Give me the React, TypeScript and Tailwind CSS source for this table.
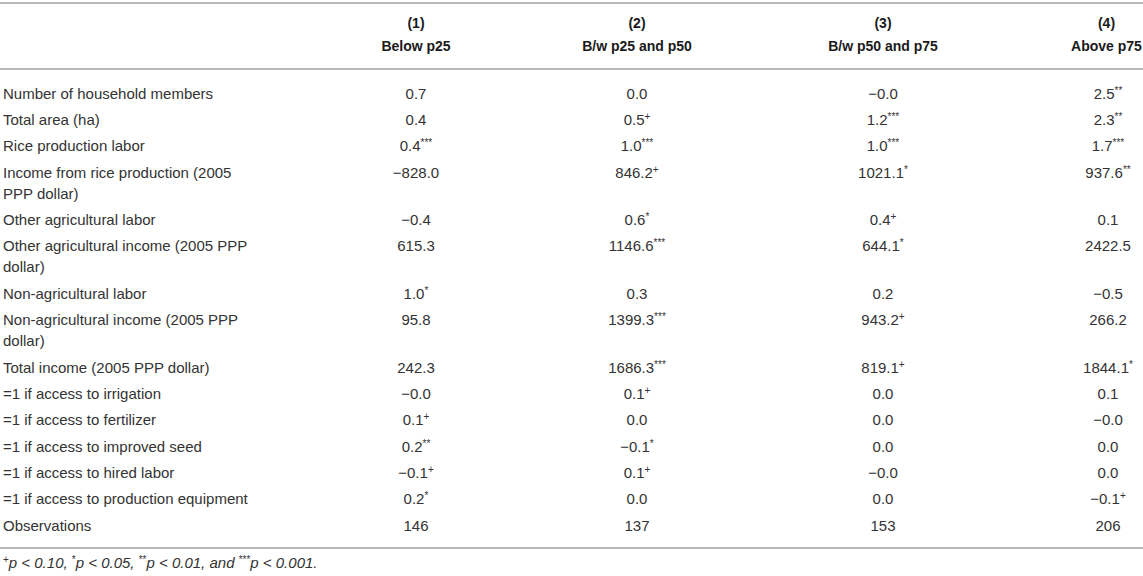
import React from "react";

type Cell = { v: string; s?: string };

interface Row {
  label: string;
  cells: Cell[];
}

function c(v: string, s?: string): Cell {
  return { v, s };
}

const rows: Row[] = [
  { label: "Number of household members", cells: [c("0.7"), c("0.0"), c("−0.0"), c("2.5", "**")] },
  { label: "Total area (ha)", cells: [c("0.4"), c("0.5", "+"), c("1.2", "***"), c("2.3", "**")] },
  { label: "Rice production labor", cells: [c("0.4", "***"), c("1.0", "***"), c("1.0", "***"), c("1.7", "***")] },
  {
    label: "Income from rice production (2005 PPP dollar)",
    cells: [c("−828.0"), c("846.2", "+"), c("1021.1", "*"), c("937.6", "**")],
  },
  { label: "Other agricultural labor", cells: [c("−0.4"), c("0.6", "*"), c("0.4", "+"), c("0.1")] },
  {
    label: "Other agricultural income (2005 PPP dollar)",
    cells: [c("615.3"), c("1146.6", "***"), c("644.1", "*"), c("2422.5")],
  },
  { label: "Non-agricultural labor", cells: [c("1.0", "*"), c("0.3"), c("0.2"), c("−0.5")] },
  {
    label: "Non-agricultural income (2005 PPP dollar)",
    cells: [c("95.8"), c("1399.3", "***"), c("943.2", "+"), c("266.2")],
  },
  { label: "Total income (2005 PPP dollar)", cells: [c("242.3"), c("1686.3", "***"), c("819.1", "+"), c("1844.1", "*")] },
  { label: "=1 if access to irrigation", cells: [c("−0.0"), c("0.1", "+"), c("0.0"), c("0.1")] },
  { label: "=1 if access to fertilizer", cells: [c("0.1", "+"), c("0.0"), c("0.0"), c("−0.0")] },
  { label: "=1 if access to improved seed", cells: [c("0.2", "**"), c("−0.1", "*"), c("0.0"), c("0.0")] },
  { label: "=1 if access to hired labor", cells: [c("−0.1", "+"), c("0.1", "+"), c("−0.0"), c("0.0")] },
  { label: "=1 if access to production equipment", cells: [c("0.2", "*"), c("0.0"), c("0.0"), c("−0.1", "+")] },
  { label: "Observations", cells: [c("146"), c("137"), c("153"), c("206")] },
];

const heads = [
  { n: "(1)", t: "Below p25" },
  { n: "(2)", t: "B/w p25 and p50" },
  { n: "(3)", t: "B/w p50 and p75" },
  { n: "(4)", t: "Above p75" },
];

function Sup({ s }: { s: string }) {
  return <sup className="text-[10px] not-italic">{s}</sup>;
}

export default function App() {
  const last = rows.length - 1;

  return (
    <div className="w-[1143px] overflow-hidden bg-white pt-[2px] font-['Liberation_Sans',Arial,sans-serif] text-[#333]">
      <table className="w-[1143px] table-fixed border-collapse">
        <colgroup>
          <col className="w-[262px]" />
          <col className="w-[308px]" />
          <col className="w-[134px]" />
          <col className="w-[358px]" />
          <col className="w-[81px]" />
        </colgroup>
        <thead>
          <tr className="border-y-2 border-[#b8b8b8]">
            <th className="p-0" />
            {heads.map((h, i) => (
              <th
                key={h.n}
                className={
                  i === 3
                    ? "pt-[8px] pb-[10px] pl-[8px] text-center text-[14px] font-bold leading-[23px] text-[#1a1a1a]"
                    : "pt-[8px] pb-[10px] text-center text-[14px] font-bold leading-[23px] text-[#1a1a1a]"
                }
              >
                <div>{h.n}</div>
                <div className="whitespace-nowrap">{h.t}</div>
              </th>
            ))}
          </tr>
        </thead>
        <tbody className="border-b-2 border-[#b8b8b8] text-[15px] leading-[21px]">
          {rows.map((r, ri) => {
            const pad =
              ri === 0 ? "pt-[12.5px] pb-[2.7px]" : ri === last ? "pt-[2.7px] pb-[11.5px]" : "py-[2.7px]";
            return (
              <tr key={r.label}>
                <td className={`${pad} pl-[3px] pr-[4px] align-top`}>{r.label}</td>
                {r.cells.map((cell, ci) => (
                  <td
                    key={ci}
                    className={`${pad} ${ci === 3 ? "pl-[11px]" : ""} whitespace-nowrap text-center align-top`}
                  >
                    {cell.v}
                    {cell.s && <Sup s={cell.s} />}
                  </td>
                ))}
              </tr>
            );
          })}
        </tbody>
      </table>
      <p className="mt-[4px] pl-[3px] text-[15px] italic leading-[20px] text-[#333]">
        <Sup s="+" />p &lt; 0.10, <Sup s="*" />p &lt; 0.05, <Sup s="**" />p &lt; 0.01, and <Sup s="***" />p &lt; 0.001.
      </p>
    </div>
  );
}
